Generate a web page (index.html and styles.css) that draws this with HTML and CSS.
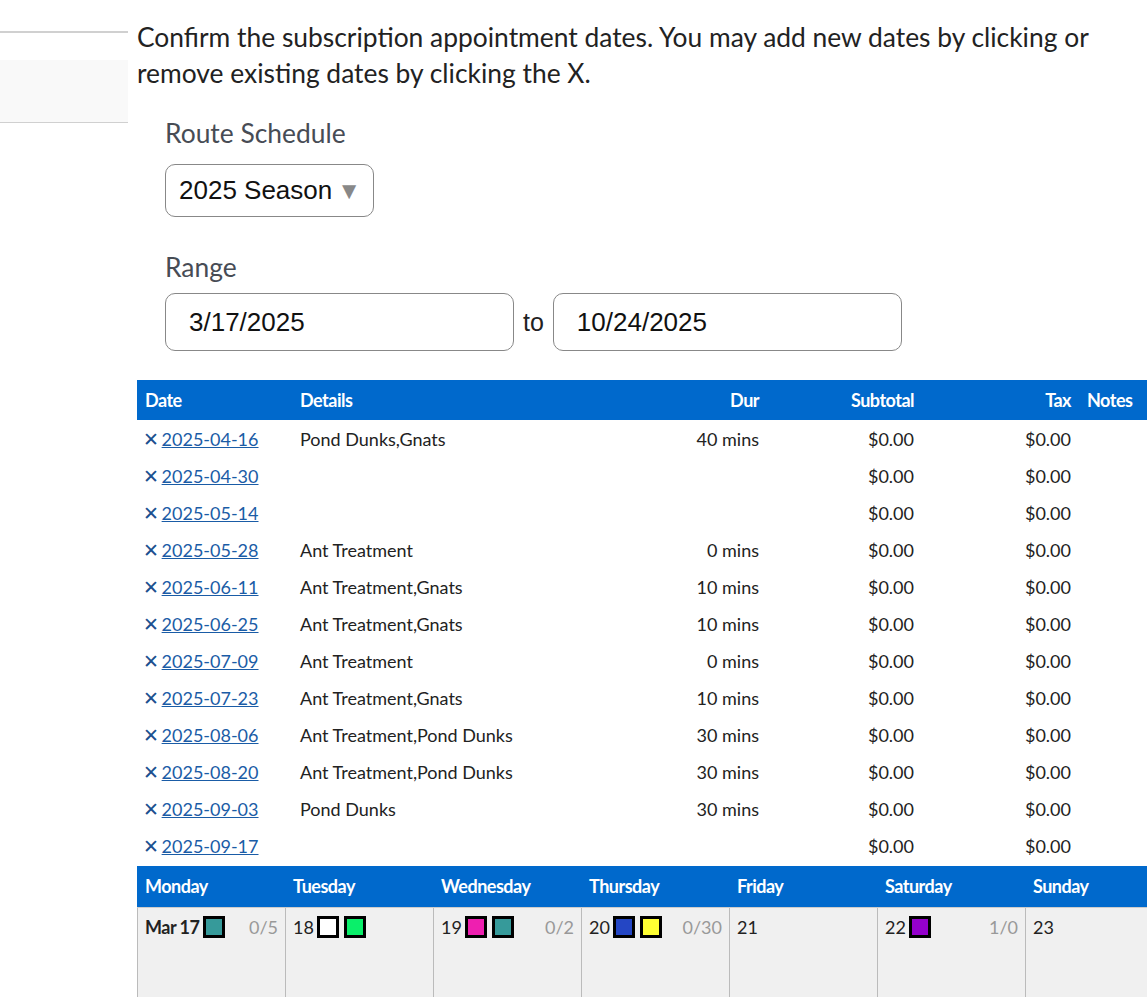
FILE: index.html
```html
<!DOCTYPE html>
<html lang="en">
<head>
    <meta charset="UTF-8">
    <meta name="viewport" content="width=device-width, initial-scale=1.0">
    <title>Subscription Dates</title>
    <link rel="stylesheet" href="styles.css">
</head>
<body>
    <div class="page">
        <div class="sidebar">
            <div class="sidebar-line"></div>
            <div class="sidebar-box"></div>
        </div>
        <div class="main">
            <p class="intro">Confirm the subscription appointment dates. You may add new dates by clicking or remove existing dates by clicking the X.</p>

            <div class="form">
                <div class="field-label">Route Schedule</div>
                <div class="select-box">2025 Season <span class="caret">&#9660;</span></div>

                <div class="field-label range-label">Range</div>
                <div class="range-row">
                    <div class="date-input">3/17/2025</div>
                    <span class="range-to">to</span>
                    <div class="date-input">10/24/2025</div>
                </div>
            </div>

            <table class="dates-table">
                <colgroup>
                    <col style="width:155px">
                    <col style="width:328px">
                    <col style="width:147px">
                    <col style="width:155px">
                    <col style="width:157px">
                    <col style="width:68px">
                </colgroup>
                <thead>
                    <tr>
                        <th>Date</th>
                        <th>Details</th>
                        <th class="num">Dur</th>
                        <th class="num">Subtotal</th>
                        <th class="num">Tax</th>
                        <th>Notes</th>
                    </tr>
                </thead>
                <tbody>
                    <tr><td><span class="remove">&#10005;</span> <a href="#">2025-04-16</a></td><td>Pond Dunks,Gnats</td><td class="num">40 mins</td><td class="num">$0.00</td><td class="num">$0.00</td><td></td></tr>
                    <tr><td><span class="remove">&#10005;</span> <a href="#">2025-04-30</a></td><td></td><td class="num"></td><td class="num">$0.00</td><td class="num">$0.00</td><td></td></tr>
                    <tr><td><span class="remove">&#10005;</span> <a href="#">2025-05-14</a></td><td></td><td class="num"></td><td class="num">$0.00</td><td class="num">$0.00</td><td></td></tr>
                    <tr><td><span class="remove">&#10005;</span> <a href="#">2025-05-28</a></td><td>Ant Treatment</td><td class="num">0 mins</td><td class="num">$0.00</td><td class="num">$0.00</td><td></td></tr>
                    <tr><td><span class="remove">&#10005;</span> <a href="#">2025-06-11</a></td><td>Ant Treatment,Gnats</td><td class="num">10 mins</td><td class="num">$0.00</td><td class="num">$0.00</td><td></td></tr>
                    <tr><td><span class="remove">&#10005;</span> <a href="#">2025-06-25</a></td><td>Ant Treatment,Gnats</td><td class="num">10 mins</td><td class="num">$0.00</td><td class="num">$0.00</td><td></td></tr>
                    <tr><td><span class="remove">&#10005;</span> <a href="#">2025-07-09</a></td><td>Ant Treatment</td><td class="num">0 mins</td><td class="num">$0.00</td><td class="num">$0.00</td><td></td></tr>
                    <tr><td><span class="remove">&#10005;</span> <a href="#">2025-07-23</a></td><td>Ant Treatment,Gnats</td><td class="num">10 mins</td><td class="num">$0.00</td><td class="num">$0.00</td><td></td></tr>
                    <tr><td><span class="remove">&#10005;</span> <a href="#">2025-08-06</a></td><td>Ant Treatment,Pond Dunks</td><td class="num">30 mins</td><td class="num">$0.00</td><td class="num">$0.00</td><td></td></tr>
                    <tr><td><span class="remove">&#10005;</span> <a href="#">2025-08-20</a></td><td>Ant Treatment,Pond Dunks</td><td class="num">30 mins</td><td class="num">$0.00</td><td class="num">$0.00</td><td></td></tr>
                    <tr><td><span class="remove">&#10005;</span> <a href="#">2025-09-03</a></td><td>Pond Dunks</td><td class="num">30 mins</td><td class="num">$0.00</td><td class="num">$0.00</td><td></td></tr>
                    <tr><td><span class="remove">&#10005;</span> <a href="#">2025-09-17</a></td><td></td><td class="num"></td><td class="num">$0.00</td><td class="num">$0.00</td><td></td></tr>
                </tbody>
            </table>

            <div class="calendar">
                <div class="cal-head">Monday</div>
                <div class="cal-head">Tuesday</div>
                <div class="cal-head">Wednesday</div>
                <div class="cal-head">Thursday</div>
                <div class="cal-head">Friday</div>
                <div class="cal-head">Saturday</div>
                <div class="cal-head">Sunday</div>

                <div class="cal-cell">
                    <span class="day first">Mar 17</span><span class="swatch teal"></span>
                    <span class="count">0/5</span>
                </div>
                <div class="cal-cell">
                    <span class="day">18</span><span class="swatch white"></span><span class="swatch green"></span>
                </div>
                <div class="cal-cell">
                    <span class="day">19</span><span class="swatch magenta"></span><span class="swatch teal"></span>
                    <span class="count">0/2</span>
                </div>
                <div class="cal-cell">
                    <span class="day">20</span><span class="swatch blue"></span><span class="swatch yellow"></span>
                    <span class="count">0/30</span>
                </div>
                <div class="cal-cell">
                    <span class="day">21</span>
                </div>
                <div class="cal-cell">
                    <span class="day">22</span><span class="swatch purple"></span>
                    <span class="count">1/0</span>
                </div>
                <div class="cal-cell">
                    <span class="day">23</span>
                </div>
            </div>
        </div>
    </div>
</body>
</html>
```

FILE: styles.css
```css
body {
    font-family: Lato, "Noto Sans", sans-serif;
    margin: 0;
    padding: 0;
    background-color: #fff;
    color: #222;
}

.page {
    display: flex;
    overflow: hidden;
    height: 997px;
}

.sidebar {
    flex: 0 0 128px;
    padding-top: 31px;
}

.sidebar-line {
    height: 2px;
    background-color: #d0d0d0;
}

.sidebar-box {
    margin-top: 27px;
    height: 62px;
    background-color: #f9f9f9;
    border-bottom: 1px solid #d0d0d0;
}

.main {
    flex: 1;
    margin-left: 9px;
    min-width: 0;
}

.intro {
    font-size: 26.4px;
    line-height: 36px;
    margin: 19px 0 0 0;
    color: #222;
}

.form {
    padding-left: 28px;
}

.field-label {
    font-size: 26.4px;
    color: #474c55;
    margin-top: 27px;
    line-height: 30px;
}

.range-label {
    margin-top: 35px;
}

.select-box {
    display: inline-flex;
    align-items: center;
    margin-top: 16px;
    height: 51px;
    padding: 0 12px 0 13px;
    border: 1px solid #888;
    border-radius: 10px;
    font-family: "Liberation Sans", Arial, sans-serif;
    font-size: 26px;
    color: #111;
}

.caret {
    color: #888;
    font-size: 24px;
    margin-left: 5px;
}

.range-row {
    display: flex;
    align-items: center;
    margin-top: 11px;
}

.date-input {
    width: 324px;
    height: 56px;
    padding-left: 23px;
    border: 1px solid #888;
    border-radius: 10px;
    display: flex;
    align-items: center;
    font-family: "Liberation Sans", Arial, sans-serif;
    font-size: 26px;
    color: #111;
}

.range-to {
    font-family: "Liberation Sans", Arial, sans-serif;
    font-size: 25px;
    color: #222;
    margin: 0 9px;
}

.dates-table {
    width: 1010px;
    margin-top: 29px;
    border-collapse: collapse;
    table-layout: fixed;
    font-size: 18px;
}

.dates-table th {
    background-color: #0069cc;
    color: #fff;
    font-weight: bold;
    text-align: left;
    height: 40px;
    padding: 0 8px;
    letter-spacing: -0.5px;
}

.dates-table td {
    height: 37px;
    padding: 0 8px 0 8px;
    color: #222;
    white-space: nowrap;
}

.dates-table .num {
    text-align: right;
}

.remove {
    color: #1c4f8f;
    font-size: 19px;
    margin-left: -2px;
}

.dates-table a {
    color: #1a5ca6;
    margin-left: -2px;
}

.calendar {
    display: grid;
    grid-template-columns: repeat(7, 148px);
    margin-top: 2px;
}

.cal-head {
    background-color: #0069cc;
    color: #fff;
    font-size: 18px;
    font-weight: bold;
    letter-spacing: -0.5px;
    height: 41px;
    line-height: 41px;
    padding-left: 8px;
    border-bottom: 1px solid #ccc;
}

.cal-cell {
    display: flex;
    align-items: flex-start;
    gap: 5px;
    height: 100px;
    padding: 8px 7px 0 7px;
    background-color: #f0f0f0;
    border-left: 1px solid #bbb;
    font-size: 18px;
    line-height: 22px;
}

.day {
    margin-right: -2px;
}

.day.first {
    font-weight: bold;
    letter-spacing: -0.5px;
}

.swatch {
    width: 16px;
    height: 16px;
    border: 3px solid #000;
    flex: 0 0 auto;
}

.count {
    margin-left: auto;
    color: #999;
}

.teal { background-color: #369a9a; }
.white { background-color: #fff; }
.green { background-color: #0aef6a; }
.magenta { background-color: #ee1fb0; }
.blue { background-color: #2446c4; }
.yellow { background-color: #ffff33; }
.purple { background-color: #9400cc; }
```
